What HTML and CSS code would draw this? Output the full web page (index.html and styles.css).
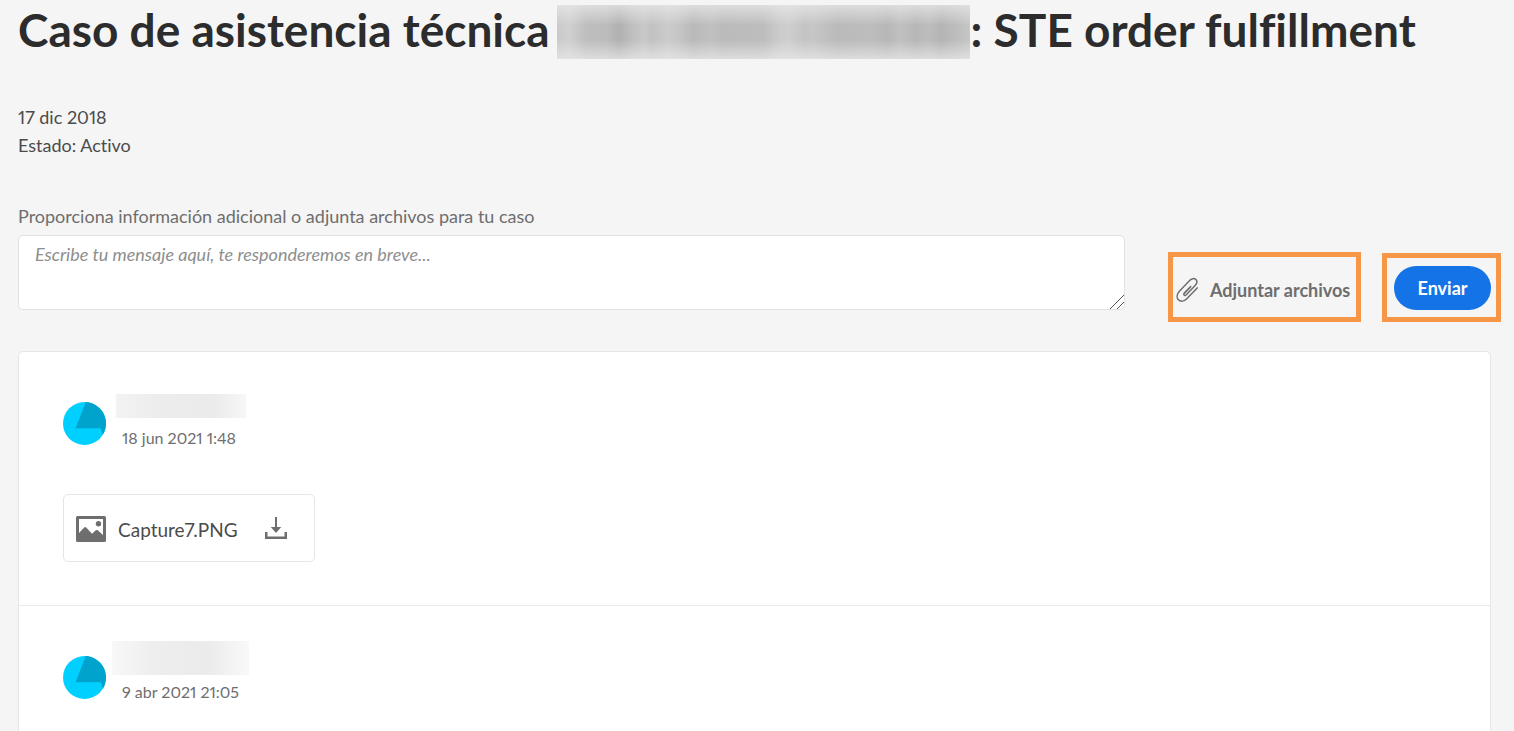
FILE: index.html
```html
<!DOCTYPE html>
<html lang="es">
<head>
<meta charset="utf-8">
<meta name="viewport" content="width=device-width, initial-scale=1">
<title>Caso de asistencia técnica</title>
<link rel="stylesheet" href="styles.css">
</head>
<body>
<main class="page">
  <h1 class="title"><span>Caso de asistencia técnica</span><span class="redacted redacted-case"></span><span>: STE order fulfillment</span></h1>

  <div class="meta">
    <p>17 dic 2018</p>
    <p>Estado: Activo</p>
  </div>

  <form class="reply">
    <div class="field">
      <label class="field-label" for="message">Proporciona información adicional o adjunta archivos para tu caso</label>
      <textarea class="message" id="message" placeholder="Escribe tu mensaje aquí, te responderemos en breve..."></textarea>
    </div>
    <div class="highlight highlight-attach">
      <button class="attach" type="button">
        <svg class="clip" viewBox="0 0 23 26" aria-hidden="true">
          <path d="M14.800 9.500 8.300 16.300c-1.200 1.300.5 3 1.800 1.700L18.900 8.800c2-2.100 2.500-4.600 1-6.200-1.600-1.600-4.200-1.200-6 .7L3.600 14.100c-2.700 2.900-3.300 6.500-1.200 8.700s5.700 1.700 8.400-1.100L21.200 10.900"/>
          <path d="M8.300 16.300 13.900 10.400"/>
        </svg>
        <span>Adjuntar archivos</span>
      </button>
    </div>
    <div class="highlight highlight-send">
      <button class="send" type="submit">Enviar</button>
    </div>
  </form>

  <section class="thread">
    <article class="comment">
      <header class="comment-head">
        <svg class="avatar" viewBox="0 0 43 43" aria-hidden="true">
          <circle cx="21.500" cy="21.500" r="21.500" fill="#00d0ff"/>
          <path d="M22.800 0A21.500 21.500 0 0 1 39.800 32.700L37.500 26.300H12.500Z" fill="#00a3cc"/>
        </svg>
        <div class="who">
          <span class="redacted redacted-name"></span>
          <time class="date" datetime="2021-06-18T01:48">18 jun 2021 1:48</time>
        </div>
      </header>
      <a class="file" href="#capture7">
        <svg class="picture" viewBox="0 0 30 26" aria-hidden="true">
          <path fill-rule="evenodd" d="M1.500 0H28.500Q30 0 30 1.500V24.500Q30 26 28.500 26H1.500Q0 26 0 24.500V1.500Q0 0 1.500 0ZM3 3V17L8.200 11.500Q9.200 10.600 10.200 11.500L16 17.700 19.800 14.300Q20.800 13.600 21.800 14.300L27 19V3Z"/>
          <circle cx="22.500" cy="7.700" r="2.700"/>
        </svg>
        <span class="file-name">Capture7.PNG</span>
        <svg class="download" viewBox="0 0 22 22" aria-hidden="true">
          <path d="M10 0H12V10H16.200L11 16 5.800 10H10ZM0 15H2.500V19.500H19.500V15H22V22H0Z"/>
        </svg>
      </a>
    </article>

    <article class="comment">
      <header class="comment-head">
        <svg class="avatar" viewBox="0 0 43 43" aria-hidden="true">
          <circle cx="21.500" cy="21.500" r="21.500" fill="#00d0ff"/>
          <path d="M22.800 0A21.500 21.500 0 0 1 39.800 32.700L37.500 26.300H12.500Z" fill="#00a3cc"/>
        </svg>
        <div class="who who-wide">
          <span class="redacted redacted-name-tall"></span>
          <time class="date" datetime="2021-04-09T21:05">9 abr 2021 21:05</time>
        </div>
      </header>
    </article>
  </section>
</main>
</body>
</html>
```
FILE: styles.css
```css
* {
  box-sizing: border-box;
}

body {
  margin: 0;
  background: #f5f5f5;
  color: #4b4b4b;
  font-family: "Lato", "Open Sans", sans-serif;
  font-size: 18px;
  font-variant-ligatures: none;
  font-variant-numeric: proportional-nums;
  line-height: 28px;
  overflow: hidden;
}

button,
textarea {
  font: inherit;
}

p {
  margin: 0;
}

.page {
  height: 100vh;
  padding: 0 23px 0 18px;
  overflow: hidden;
}

.title {
  display: flex;
  margin: 0;
  color: #2c2c2c;
  font-size: 46px;
  font-weight: 700;
  line-height: 60px;
  white-space: nowrap;
}

.redacted {
  display: block;
  flex: none;
}

.redacted-case {
  width: 413px;
  height: 54px;
  margin: 5px 1px 0 7px;
  background:
    linear-gradient(rgba(235, 235, 235, 0.7), rgba(235, 235, 235, 0) 38%, rgba(235, 235, 235, 0) 65%, rgba(235, 235, 235, 0.7)),
    linear-gradient(90deg, #cacaca, #d0d0d0 3%, #bebebe 7%, #bcbcbc 12%, #b1b1b1 15%, #bebebe 18%, #c8c8c8 21%, #c2c2c2 23%, #cbcbcb 27%, #c4c4c4 30%, #b9b9b9 33%, #c0c0c0 37%, #bbbbbb 40%, #bdbdbd 50%, #cccccc 54%, #cecece 56%, #c4c4c4 60%, #c6c6c6 62%, #bababa 68%, #bdbdbd 76%, #b7b7b7 80%, #c0c0c0 83%, #b7b7b7 87%, #bdbdbd 90%, #b4b4b4 93%, #c6c6c6);
}

.meta {
  margin-top: 43px;
}

.reply {
  display: flex;
  align-items: flex-start;
  margin: 43px -10px 0 0;
}

.field {
  display: flex;
  flex: 1;
  flex-direction: column;
}

.field-label {
  height: 33px;
  color: #6e6e6e;
}

.message {
  width: 100%;
  height: 75px;
  padding: 4px 16px;
  border: 1px solid #e1e1e1;
  border-radius: 5px;
  background: #fff;
  color: #4b4b4b;
  resize: vertical;
}

.message::-webkit-scrollbar {
  width: 16px;
  height: 16px;
}

.message::-webkit-resizer {
  background: linear-gradient(135deg, transparent 51%, #555 51%, #555 55%, transparent 55%, transparent 74%, #555 74%, #555 78%, transparent 78%);
}

.message::placeholder {
  color: #8e8e8e;
  font-style: italic;
  opacity: 1;
}

.highlight {
  display: flex;
  border: 5px solid #f79646;
}

.highlight-attach {
  width: 193px;
  height: 70px;
  margin: 50px 21px 0 43px;
}

.highlight-send {
  width: 119px;
  height: 69px;
  margin-top: 51px;
  padding: 8px 5px 0 7px;
}

.attach {
  display: flex;
  align-items: center;
  gap: 11px;
  padding: 6px 0 0 3px;
  border: 0;
  background: none;
  color: #6e6e6e;
  font-weight: 700;
  white-space: nowrap;
}

.clip {
  width: 23px;
  height: 26px;
  fill: none;
  stroke: #6e6e6e;
  stroke-width: 1.5;
  stroke-linecap: round;
  stroke-linejoin: round;
}

.send {
  width: 97px;
  height: 44px;
  padding: 0;
  border: 0;
  border-radius: 22px;
  background: #1473e6;
  color: #fff;
  font-weight: 700;
}

.thread {
  margin-top: 29px;
  border: 1px solid #e6e6e6;
  border-radius: 5px;
  background: #fff;
}

.comment {
  padding: 35px 44px 43px;
}

.comment + .comment {
  border-top: 1px solid #eaeaea;
}

.comment-head {
  display: flex;
  align-items: flex-end;
  gap: 6px;
  min-height: 63px;
}

.avatar {
  width: 43px;
  height: 43px;
  margin-bottom: 5px;
}

.who {
  display: flex;
  flex-direction: column;
  gap: 8px;
}

.who-wide {
  gap: 5px;
}

.date {
  padding-left: 10px;
  color: #6e6e6e;
  font-size: 16px;
  line-height: 24px;
}

.redacted-name {
  width: 130px;
  height: 24px;
  margin-left: 4px;
  background: linear-gradient(90deg, #f3f3f3, #ececec 35%, #ebebeb 75%, #f7f7f7);
}

.redacted-name-tall {
  width: 137px;
  height: 34px;
  background: linear-gradient(90deg, #f8f8f8, #eeeeee 30%, #ebebeb 70%, #f9f9f9);
}

.file {
  display: inline-flex;
  align-items: center;
  width: 252px;
  height: 68px;
  margin-top: 44px;
  padding: 2px 12px 0;
  border: 1px solid #e6e6e6;
  border-radius: 5px;
  color: #4b4b4b;
  font-size: 19px;
  text-decoration: none;
  vertical-align: top;
}

.picture {
  width: 30px;
  height: 26px;
  margin-right: 12px;
  fill: #6e6e6e;
}

.file-name {
  flex: 1;
  padding-top: 2px;
}

.download {
  width: 22px;
  height: 22px;
  margin: 0 15px 2px 0;
  fill: #6e6e6e;
}
```
